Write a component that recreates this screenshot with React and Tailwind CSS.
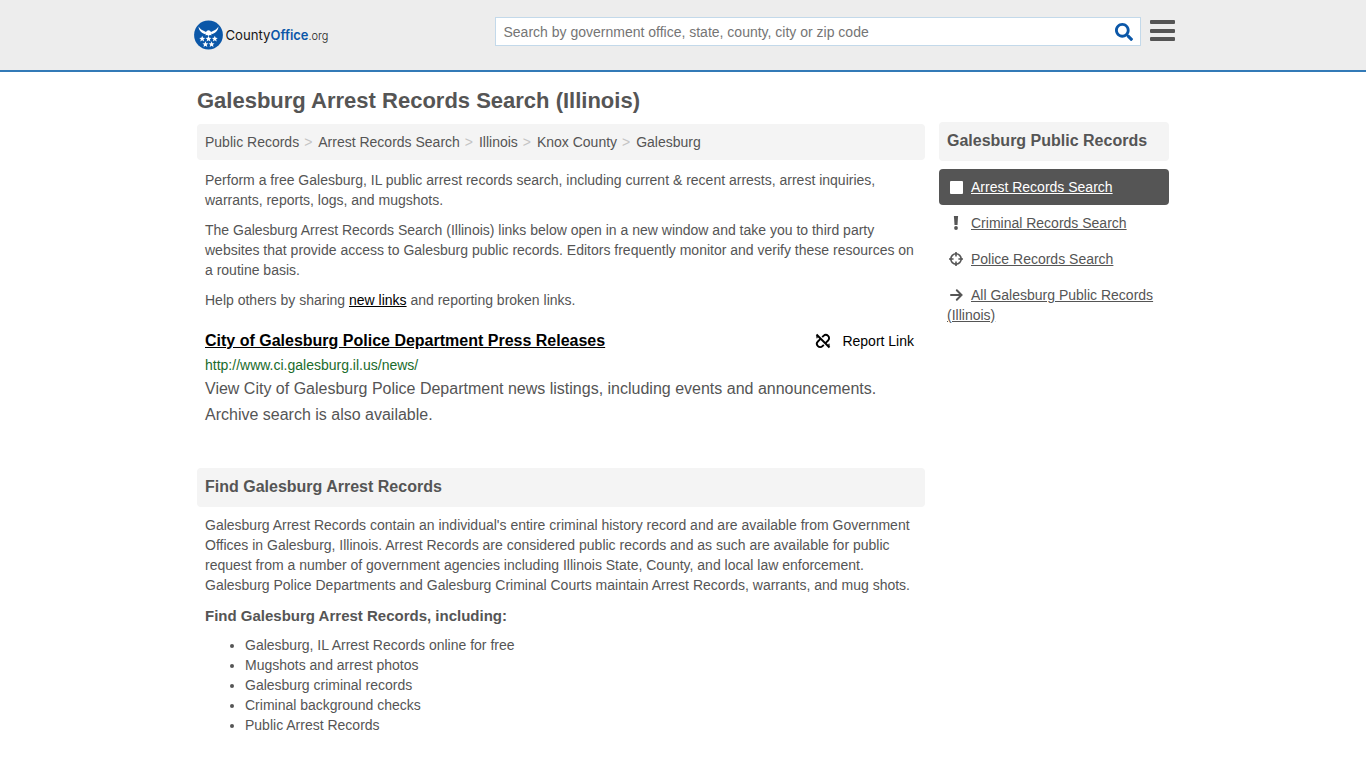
import React from "react";
import { FaSearch } from "react-icons/fa";

const crumbs = ["Public Records", "Arrest Records Search", "Illinois", "Knox County", "Galesburg"];

const items = [
  "Galesburg, IL Arrest Records online for free",
  "Mugshots and arrest photos",
  "Galesburg criminal records",
  "Criminal background checks",
  "Public Arrest Records",
];

const star = "M0-2.700.75-.85 2.700-.8 1.200.45 1.750 2.400 0 1.250-1.750 2.400-1.200.45-2.700-.8-.75-.85Z";
const stars = [[8.2, 18.8], [14.5, 18.8], [20.8, 18.8], [11.400, 24.300], [17.600, 24.300]];

function Logo() {
  return (
    <svg width="136" height="30" viewBox="0 0 136 30" className="block" aria-label="CountyOffice.org">
      <circle cx="14.5" cy="15" r="14.4" fill="#0b57a8" />
      <path
        d="M4.500 6.500C6 9 8.500 10.500 12 12l1-1.200c.8-.8 2.200-.8 3 0l1 1.200c3.500-1.500 6-3 7.500-5.500-.2 3.600-2.200 6.200-6 7.500l-1.500-.3.8 1.600-2-.4-1.300 1-1.300-1-2 .4.8-1.600-1.500.3c-3.800-1.300-5.800-3.900-6-7.500Z"
        fill="#fff"
      />
      {stars.map(([x, y]) => (
        <path key={x} d={star} transform={`translate(${x} ${y}) scale(1.1)`} fill="#fff" />
      ))}
      <g fontFamily="Inter, sans-serif" fontSize="13.5">
        <text x="31.500" y="20" textLength="45" lengthAdjust="spacingAndGlyphs" fontWeight="400" fill="#161616">County</text>
        <text x="76.500" y="20" textLength="38" lengthAdjust="spacingAndGlyphs" fontWeight="600" fill="#0b57a8">Office</text>
        <text x="114.500" y="20" textLength="20" lengthAdjust="spacingAndGlyphs" fontSize="12.5" fontWeight="300" fill="#222">.org</text>
      </g>
    </svg>
  );
}

function Unlink() {
  return (
    <svg width="16" height="16" viewBox="0 0 16 16" fill="none" stroke="currentColor" strokeWidth="1.900" className="mr-[1px]">
      <path d="M1.500 1.500l13 13" />
      <path d="M7.200 4.200l1.300-1.300c1.300-1.300 3.300-1.300 4.600 0s1.300 3.300 0 4.600l-2.600 2.600" />
      <path d="M8.800 11.800l-1.300 1.300c-1.300 1.300-3.300 1.300-4.600 0s-1.300-3.300 0-4.600l2.600-2.600" />
      <path d="M2.200 5.200c-.5-1-.3-2 .4-2.700M13.800 10.800c.5 1 .3 2-.4 2.700" strokeWidth="1.300" />
    </svg>
  );
}

function Exclamation() {
  return (
    <svg width="14" height="14" viewBox="0 0 14 14" fill="currentColor">
      <path d="M4.900 0h4.200l-.6 9h-3Z" />
      <circle cx="7" cy="12" r="1.900" />
    </svg>
  );
}

function Crosshairs() {
  return (
    <svg width="14" height="14" viewBox="0 0 14 14" fill="none" stroke="currentColor" strokeWidth="1.600">
      <circle cx="7" cy="7" r="5.200" />
      <path d="M7 0v4.600M7 9.400V14M0 7h4.600M9.400 7H14" />
    </svg>
  );
}

function Arrow() {
  return (
    <svg width="14" height="14" viewBox="0 0 14 14" fill="none" stroke="currentColor" strokeWidth="2" strokeLinecap="round">
      <path d="M2 7h10.500M7.800 2.300L12.500 7l-4.700 4.700" />
    </svg>
  );
}

function SideLink({ icon, active, children }) {
  return (
    <a className={active ? "block rounded bg-[#555] p-2 text-white" : "block p-2"}>
      <span className="mr-[6px] inline-flex h-[14px] w-[18px] items-center justify-center align-[-2px]">{icon}</span>
      <span className="underline">{children}</span>
    </a>
  );
}

export default function App() {
  return (
    <div className="h-[768px] w-full overflow-hidden bg-white font-['Liberation_Sans',Arial,sans-serif] text-[14px] leading-5 text-[#555]">
      <header className="h-[72px] border-b-2 border-[#337ab7] bg-[#ededed]">
        <div className="flex items-start pl-[194px]">
          <div className="w-[301px] pt-5">
            <Logo />
          </div>
          <div className="mt-[17px] flex h-[29px] w-[646px] items-center justify-between border border-[#c3d9ea] bg-white pr-[7px] pl-[7.5px] text-[#757575]">
            <span>Search by government office, state, county, city or zip code</span>
            <FaSearch className="size-[18px] text-[#0b57a8]" />
          </div>
          <div className="mt-5 ml-[9px] flex w-[25px] flex-col gap-[4.5px]">
            <div className="h-1 rounded-[1px] bg-[#555]" />
            <div className="h-1 rounded-[1px] bg-[#555]" />
            <div className="h-1 rounded-[1px] bg-[#555]" />
          </div>
        </div>
      </header>

      <main className="flex items-start gap-[14px] pl-[197px]">
        <div className="w-[728px]">
          <h1 className="mt-[17px] mb-[11px] text-[22px] leading-6 font-bold">Galesburg Arrest Records Search (Illinois)</h1>
          <nav className="flex h-9 items-center rounded bg-[#f4f4f4] px-2">
            {crumbs.map((c, i) => (
              <React.Fragment key={c}>
                {i > 0 && <span className="pr-[5.9px] pl-[5px] text-[#c4c4c4]">&gt;</span>}
                <span>{c}</span>
              </React.Fragment>
            ))}
          </nav>
          <div className="flex flex-col gap-[10px] px-2 pt-[10px]">
            <p>Perform a free Galesburg, IL public arrest records search, including current &amp; recent arrests, arrest inquiries, warrants, reports, logs, and mugshots.</p>
            <p>The Galesburg Arrest Records Search (Illinois) links below open in a new window and take you to third party websites that provide access to Galesburg public records. Editors frequently monitor and verify these resources on a routine basis.</p>
            <p>Help others by sharing <a className="text-black underline">new links</a> and reporting broken links.</p>
          </div>
          <section className="h-[158px] px-2 pt-[18px]">
            <div className="flex h-[26px] items-center justify-between text-black">
              <a className="text-[16px] font-bold underline">City of Galesburg Police Department Press Releases</a>
              <a className="flex items-center gap-[10px] pr-[3px]">
                <Unlink />
                Report Link
              </a>
            </div>
            <div className="mt-[1px] mb-[1px] text-[#1a6b2b]">http://www.ci.galesburg.il.us/news/</div>
            <p className="text-[16px] leading-[26px]">View City of Galesburg Police Department news listings, including events and announcements. Archive search is also available.</p>
          </section>
          <h2 className="flex h-[39px] items-center rounded bg-[#f4f4f4] px-2 pb-[2px] text-[16px] font-bold">Find Galesburg Arrest Records</h2>
          <div className="px-2 pt-2">
            <p>Galesburg Arrest Records contain an individual's entire criminal history record and are available from Government Offices in Galesburg, Illinois. Arrest Records are considered public records and as such are available for public request from a number of government agencies including Illinois State, County, and local law enforcement. Galesburg Police Departments and Galesburg Criminal Courts maintain Arrest Records, warrants, and mug shots.</p>
            <h3 className="mt-[11px] text-[15px] font-bold">Find Galesburg Arrest Records, including:</h3>
            <ul className="mt-[9px] list-disc pl-10">
              {items.map((t) => (
                <li key={t}>{t}</li>
              ))}
            </ul>
          </div>
        </div>

        <aside className="w-[230px] pt-[50px]">
          <h2 className="mb-2 flex h-[39px] items-center rounded bg-[#f4f4f4] px-2 pb-[2px] text-[16px] font-bold">Galesburg Public Records</h2>
          <SideLink active icon={<span className="size-[13px] rounded-[1px] bg-white" />}>Arrest Records Search</SideLink>
          <SideLink icon={<Exclamation />}>Criminal Records Search</SideLink>
          <SideLink icon={<Crosshairs />}>Police Records Search</SideLink>
          <SideLink icon={<Arrow />}>All Galesburg Public Records (Illinois)</SideLink>
        </aside>
      </main>
    </div>
  );
}
